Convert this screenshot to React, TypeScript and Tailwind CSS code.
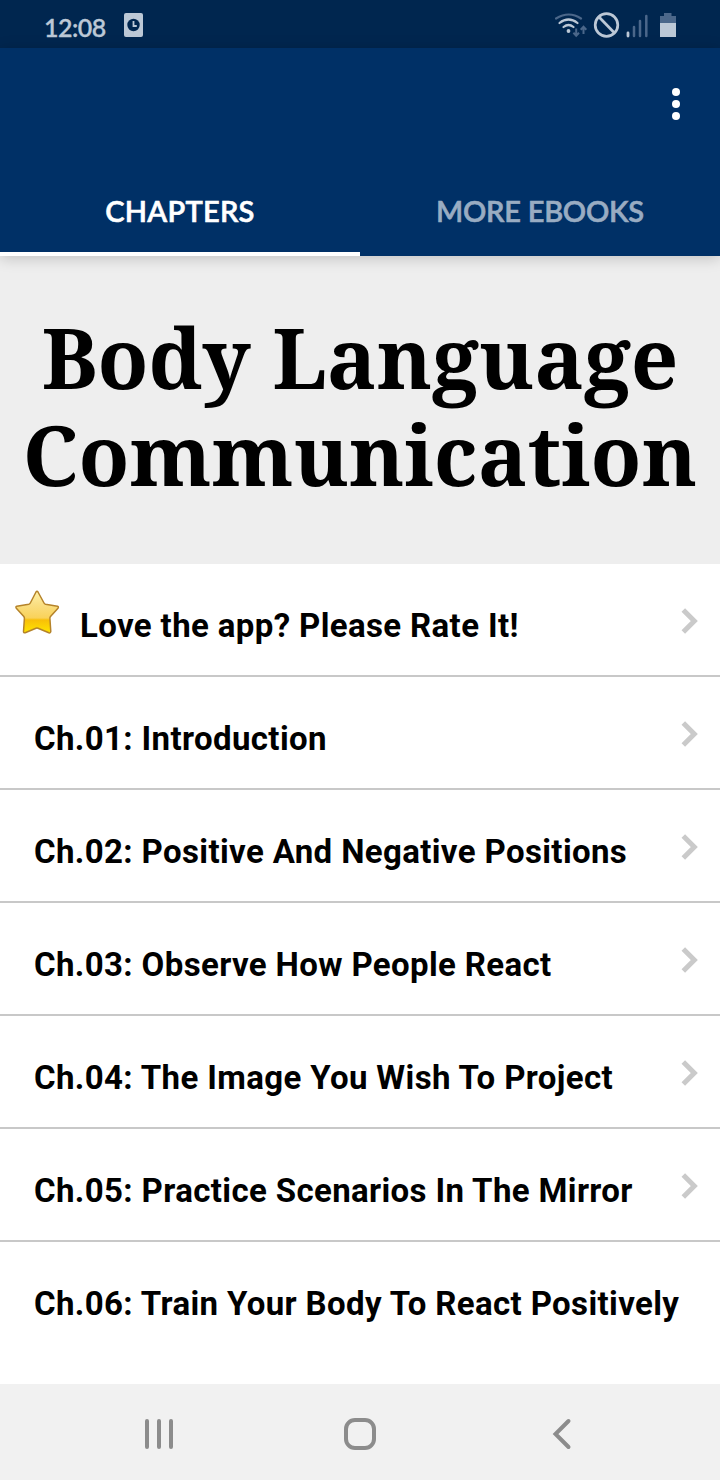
const chapters = [
  "Ch.01: Introduction",
  "Ch.02: Positive And Negative Positions",
  "Ch.03: Observe How People React",
  "Ch.04: The Image You Wish To Project",
  "Ch.05: Practice Scenarios In The Mirror",
]

function StatusBar() {
  return (
    <div className="flex h-12 items-center justify-between bg-[#00264f] pl-[44px] pr-[43px] text-[#bcc8d6]">
      <div className="flex items-center">
        <span className="w-[80px] pt-[7px] font-['Lato'] text-[25px] leading-none font-semibold tracking-[-0.5px] [-webkit-text-stroke:0.3px_currentColor]">
          12:08
        </span>
        <svg width="19" height="24" viewBox="0 0 19 24" className="mt-[2px]">
          <rect width="19" height="24" rx="2" fill="currentColor" />
          <circle cx="9.5" cy="12" r="6.2" fill="#00264f" />
          <path d="M9.5 8v5h3.3" fill="none" stroke="currentColor" strokeWidth="1.8" />
        </svg>
      </div>
      <svg width="122" height="26" viewBox="555 12 122 26" fill="none" className="mt-[2px]">
        <path d="M556 18.5q13-8 25 0" stroke="#4b678a" strokeWidth="2.2" strokeLinecap="round" />
        <path d="M559.5 23q9-7 18 0M563.5 27q5-4 10 0" stroke="currentColor" strokeWidth="2.2" strokeLinecap="round" />
        <circle cx="568.5" cy="31" r="1.9" fill="currentColor" />
        <path d="M576.2 28.500v7M573.400 32.800l2.800 3 2.800-3M583.500 34v-7M580.700 29.700l2.800-3 2.800 3" stroke="#4b678a" strokeWidth="2" />
        <circle cx="606.500" cy="25" r="11.300" stroke="currentColor" strokeWidth="2.700" />
        <path d="M599 17l15.500 16" stroke="currentColor" strokeWidth="2.700" />
        <path d="M628 33v3" stroke="currentColor" strokeWidth="2.800" strokeLinecap="round" />
        <path d="M634 27v9M640 21v15M646.300 16v20" stroke="#4b678a" strokeWidth="2.500" strokeLinecap="round" />
        <path d="M664 13h7.500v3h4.500v7h-16v-7h4z" fill="#4b678a" />
        <path d="M660 23h16v14h-16z" fill="currentColor" />
      </svg>
    </div>
  )
}

function Header() {
  return (
    <header className="relative flex h-52 flex-col bg-[#003066] shadow-[0_2px_14px_rgba(0,0,0,0.2)]">
      <div className="flex h-[120px] flex-col items-end gap-1 pt-10 pr-10">
        <span className="size-2 rounded-full bg-white" />
        <span className="size-2 rounded-full bg-white" />
        <span className="size-2 rounded-full bg-white" />
      </div>
      <nav className="grid h-[88px] grid-cols-2 text-center font-['Lato'] text-[29px] leading-[82px] font-semibold [-webkit-text-stroke:0.6px_currentColor]">
        <button className="h-[88px] border-b-4 border-white pt-[2px] tracking-[0.25px] text-white">CHAPTERS</button>
        <button className="h-[88px] border-b-4 border-transparent pt-[2px] tracking-[-0.25px] text-[#99acc2]">MORE EBOOKS</button>
      </nav>
    </header>
  )
}

function Star() {
  return (
    <svg width="46" height="46" viewBox="0 0 46 46">
      <defs>
        <linearGradient id="gold" x1="0" y1="0" x2="0" y2="1">
          <stop offset="0" stopColor="#fff3a8" />
          <stop offset="0.3" stopColor="#fadf85" />
          <stop offset="0.64" stopColor="#f9d25a" />
          <stop offset="0.69" stopColor="#f8bf08" />
          <stop offset="1" stopColor="#ffe600" />
        </linearGradient>
      </defs>
      <path
        d="M22 2q1-1.500 2 0l6 11q.5 1 1.500 1.200l12 2q1.500.6.500 2l-7.500 8.300q-.8 1-.6 2l.9 13q-.3 1.800-2 1.300l-10.800-4.500q-1-.4-2 0l-10.800 4.500q-1.700.3-1.700-1.300l.9-13q.1-1-.6-2l-7.500-8.300q-1-1.400.5-2l12-2q1-.2 1.500-1.200z"
        fill="url(#gold)"
        stroke="#b5832a"
        strokeWidth="1.500"
        strokeLinejoin="round"
      />
    </svg>
  )
}

function Arrow() {
  return (
    <svg width="18" height="28" viewBox="0 0 18 28" fill="none" className="mt-[2px] shrink-0">
      <path d="M3.300 3l11 11-11 11" stroke="#cacaca" strokeWidth="5" />
    </svg>
  )
}

export default function App() {
  return (
    <div className="flex h-[1480px] w-[720px] flex-col overflow-hidden bg-white font-['Roboto',sans-serif]">
      <StatusBar />
      <Header />
      <h1 className="h-[308px] bg-[#eeeeee] pt-[52px] text-center font-['Noto_Serif','DejaVu_Serif',serif] text-[83.2px] leading-[97px] font-bold whitespace-nowrap text-black">
        <span className="block">Body Language</span>
        <span className="block">Communication</span>
      </h1>
      <main className="flex-1 text-[33px] font-bold tracking-[0.37px] text-black">
        <div className="flex h-[113px] items-center border-b-2 border-[#c8c8c8] pr-[22px] pl-[14px]">
          <div className="mb-[14px] w-[66px]">
            <Star />
          </div>
          <span className="flex-1 pt-[13px]">Love the app? Please Rate It!</span>
          <Arrow />
        </div>
        {chapters.map((title) => (
          <div key={title} className="flex h-[113px] items-center border-b-2 border-[#c8c8c8] pr-[22px] pl-[34px]">
            <span className="flex-1 pt-[13px] whitespace-nowrap">{title}</span>
            <Arrow />
          </div>
        ))}
        <div className="flex h-[111px] items-center pl-[34px]">
          <span className="pt-[13px] whitespace-nowrap">Ch.06: Train Your Body To React Positively</span>
        </div>
      </main>
      <footer className="flex h-24 items-center bg-[#f1f1f1] pt-1 pl-[144px]">
        <svg width="430" height="34" viewBox="0 0 430 34" fill="none" stroke="#8c8c8c" strokeWidth="4" strokeLinecap="round">
          <path d="M3 4v26M15 4v26M27 4v26" />
          <rect x="202" y="3" width="28" height="28" rx="9" />
          <path d="M424.500 4l-13 13 13 13" />
        </svg>
      </footer>
    </div>
  )
}
